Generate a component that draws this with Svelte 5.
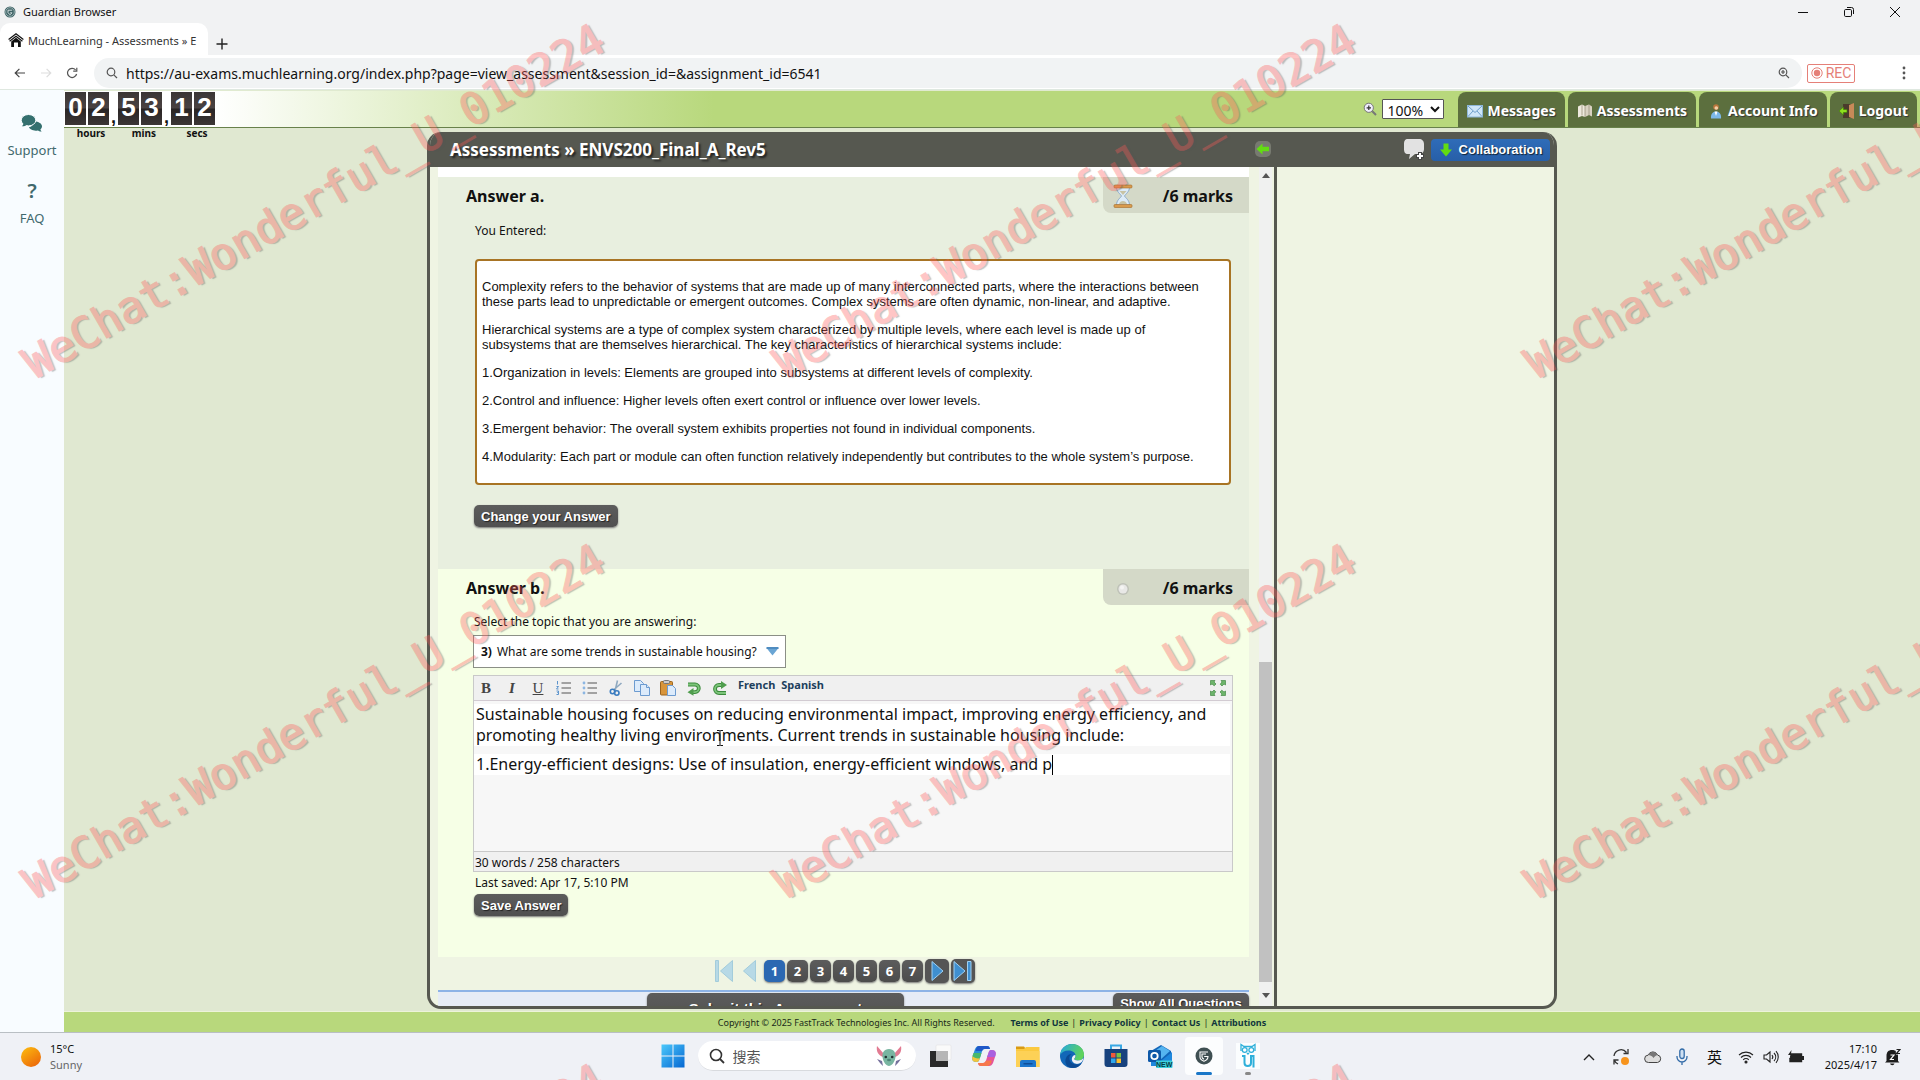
<script>
  const answers = [
    'Complexity refers to the behavior of systems that are made up of many interconnected parts, where the interactions between these parts lead to unpredictable or emergent outcomes. Complex systems are often dynamic, non-linear, and adaptive.',
    'Hierarchical systems are a type of complex system characterized by multiple levels, where each level is made up of subsystems that are themselves hierarchical. The key characteristics of hierarchical systems include:',
    '1.Organization in levels: Elements are grouped into subsystems at different levels of complexity.',
    '2.Control and influence: Higher levels often exert control or influence over lower levels.',
    '3.Emergent behavior: The overall system exhibits properties not found in individual components.',
    '4.Modularity: Each part or module can often function relatively independently but contributes to the whole system’s purpose.'
  ];
  const clock = [
    { digits: ['0', '2'], label: 'hours' },
    { digits: ['5', '3'], label: 'mins' },
    { digits: ['1', '2'], label: 'secs' }
  ];
  const nav = ['Messages', 'Assessments', 'Account Info', 'Logout'];
  const pages = [1, 2, 3, 4, 5, 6, 7];
  const links = ['Terms of Use', 'Privacy Policy', 'Contact Us', 'Attributions'];
  const marks = [0, 1, 2].flatMap((row) => [0, 1, 2].map((col) => ({ x: 38 + col * 751, y: 386 + row * 520 })));
  let current = $state(1);
</script>

<div class="desktop">
  <header class="titlebar">
    <svg class="shield" viewBox="0 0 12 12" width="12" height="12"><circle cx="6" cy="6" r="5.5" fill="#3f6467" /><circle cx="6" cy="6" r="4.3" fill="none" stroke="#b9cccc" stroke-width=".7" /><path d="M8.2 4.2H4v2.4L6 8.8l2-2H6.2" fill="none" stroke="#dfe9e9" stroke-width=".9" /></svg>
    <span>Guardian Browser</span>
    <div class="wincontrols">
      <button aria-label="Minimize"><svg viewBox="0 0 12 12" width="12" height="12"><path d="M1 6.5h10" /></svg></button>
      <button aria-label="Restore"><svg viewBox="0 0 12 12" width="12" height="12"><rect x="1.5" y="3.5" width="7" height="7" rx="1.2" /><path d="M4 1.5h4.5a2 2 0 0 1 2 2V8" /></svg></button>
      <button aria-label="Close"><svg viewBox="0 0 12 12" width="12" height="12"><path d="M1 1l10 10M11 1L1 11" /></svg></button>
    </div>
  </header>

  <div class="tabs">
    <div class="tab">
      <svg viewBox="0 0 16 14" width="16" height="14"><path d="M.6 6.4L8 .8l7.400 5.600" fill="none" stroke="#111" stroke-width="1.200" /><path d="M1.600 8.200L8 3.200l6.400 5" fill="none" stroke="#111" stroke-width="1.200" /><path d="M3.200 8.600L8 4.800l4.800 3.800V14H10V9.500H6V14H3.200z" fill="#111" /></svg>
      <span>MuchLearning - Assessments » E</span>
    </div>
    <button class="plus" aria-label="New tab"><svg viewBox="0 0 12 12" width="12" height="12"><path d="M6 .5v11M.5 6h11" stroke="#222" stroke-width="1.4" /></svg></button>
  </div>

  <div class="toolbar">
    <button aria-label="Back"><svg viewBox="0 0 12 12" width="12" height="12"><path d="M11 6H1.2M5.4 1.8L1.2 6l4.2 4.2" fill="none" stroke="#444" stroke-width="1.2" /></svg></button>
    <button aria-label="Forward"><svg viewBox="0 0 12 12" width="12" height="12"><path d="M1 6h9.8M6.6 1.8L10.8 6l-4.2 4.2" fill="none" stroke="#ddd" stroke-width="1.2" /></svg></button>
    <button aria-label="Reload"><svg viewBox="0 0 12 12" width="12" height="12"><path d="M9.6 2.9A4.6 4.6 0 1 0 10.6 7M10.8.8v3.4H7.2" fill="none" stroke="#555" stroke-width="1.2" /></svg></button>
    <label class="url">
      <svg viewBox="0 0 12 12" width="12" height="12"><circle cx="5" cy="5" r="3.8" /><path d="M7.8 7.8L11 11" /></svg>
      <input aria-label="Address" value="https://au-exams.muchlearning.org/index.php?page=view_assessment&session_id=&assignment_id=6541" />
      <svg viewBox="0 0 12 12" width="12" height="12"><circle cx="5" cy="5" r="3.8" /><path d="M7.8 7.8L11 11M3 5h4M5 3v4" /></svg>
    </label>
    <span class="rec"><svg viewBox="0 0 12 12" width="12" height="12"><circle cx="6" cy="6" r="5.2" fill="none" stroke="#e58078" /><circle cx="6" cy="6" r="3.2" fill="#e58078" /></svg>REC</span>
    <button class="more" aria-label="More"><svg viewBox="0 0 4 14" width="4" height="14" fill="#555"><circle cx="2" cy="2" r="1.4" /><circle cx="2" cy="7" r="1.4" /><circle cx="2" cy="12" r="1.4" /></svg></button>
  </div>

  <div class="body">
    <aside class="side">
      <a href="#support">
        <svg viewBox="0 0 22 18" width="22" height="18"><path d="M12 7.5c4.800-.5 9 1.700 9 4.800 0 1.300-.6 2.300-1.600 3.100.2.900.8 1.600 1.300 2.100-1.700.1-3.100-.5-3.900-1-4 .8-8.200-.8-8.800-3.400 3.300-.3 4.400-2.600 4-5.600z" fill="#35706f" /><ellipse cx="7.500" cy="6.200" rx="7.300" ry="5.700" fill="#35706f" stroke="#f9fdff" /><path d="M2.500 9c0 1.500-.9 2.600-1.700 3.300 2 .2 3.700-.5 4.700-1.300z" fill="#35706f" /></svg>
        <span>Support</span>
      </a>
      <a href="#faq"><b>?</b><span>FAQ</span></a>
    </aside>

    <div class="site">
      <div class="banner">
        <div class="clock">
          {#each clock as unit, i}
            {#if i}<span class="comma">,</span>{/if}
            <div class="unit">
              <div class="digits">{#each unit.digits as digit}<span>{digit}</span>{/each}</div>
              <b>{unit.label}</b>
            </div>
          {/each}
        </div>
        <label class="zoom">
          <svg viewBox="0 0 14 14" width="14" height="14"><circle cx="5.800" cy="5.800" r="4.600" fill="#f0eefc" stroke="#777" /><path d="M3.600 5.800H8M5.800 3.600V8" stroke="#333" stroke-width="1.200" /><path d="M9.300 9.300L13 13" stroke="#777" stroke-width="2" /></svg>
          <select aria-label="Zoom"><option>100%</option></select>
        </label>
        <nav>
          {#each nav as item, i}
            <a href="#{i}">
              <svg viewBox="0 0 16 16" width="16" height="16">
                {#if i === 0}
                  <rect x=".5" y="2.500" width="15" height="11.500" fill="#cfe6f8" stroke="#8fb8da" /><path d="M1 3l7 6.500L15 3M1 13.500l5-5.500M15 13.500L10 8" fill="none" stroke="#6f9fca" />
                {:else if i === 1}
                  <path d="M1 3.500l4-2 3 1.500v11l-3-1-4 1.500z" fill="#eee9dd" /><path d="M8 3l4-1.500 3 2v10l-3-1.500-4 2z" fill="#d9d2c2" /><path d="M5 2v10.500M8 3v11M12 2v10" stroke="#9a927f" stroke-width=".8" />
                {:else if i === 2}
                  <circle cx="8" cy="4" r="2.800" fill="#b9763c" /><circle cx="8.300" cy="5" r="1.800" fill="#f5cfa5" /><path d="M3 15.500c-.5-4 1.500-7 5-7s5.500 3 5 7z" fill="#7db9ea" /><path d="M6.500 8.500L8 13l1.500-4.500z" fill="#fff" />
                {:else}
                  <path d="M4 1h8v14H4z" fill="#4b3a2c" /><path d="M10 2l5-2v16l-5-2z" fill="#c88a58" /><path d="M0 8l4.500-4v2.500H8v3H4.500V12z" fill="#8fe01e" stroke="#3b7a05" stroke-width=".6" />
                {/if}
              </svg>
              {item}
            </a>
          {/each}
        </nav>
      </div>

      <main class="stage">
        <div class="panel">
          <div class="head">
            <h1>Assessments » ENVS200_Final_A_Rev5</h1>
            <button class="collapse" aria-label="Collapse panel"><svg viewBox="0 0 16 16" width="16" height="16"><rect width="16" height="16" rx="5" fill="#777a70" /><path d="M1.500 8l6-5.500v3.200H14v4.600H7.500v3.200z" fill="#62dc12" /></svg></button>
            <div class="tools">
              <button class="chat" aria-label="Add comment"><svg viewBox="0 0 22 24" width="22" height="24"><path d="M5 1h11c3 0 5 2 5 5v5c0 3-2 5-5 5h-4l-6 5 1-5H5c-3 0-4-2-4-5V6c0-3 1-5 4-5z" fill="#e2e2e2" /><path d="M17 14v8M13 18h8" stroke="#444" stroke-width="4" /><path d="M17 15v6M14 18h6" stroke="#fff" stroke-width="2" /></svg></button>
              <button class="collab"><svg viewBox="0 0 14 14" width="14" height="14"><path d="M4.500.5h5v6H13L7 13.500 1 6.500h3.500z" fill="#62dc12" /></svg>Collaboration</button>
            </div>
          </div>

          <div class="columns">
            <div class="scroller">
              <div class="content">
                <section class="answer a">
                  <div class="top">
                    <h2>Answer a.</h2>
                    <div class="marks">
                      <svg viewBox="0 0 20 24" width="20" height="24"><path d="M3.500 3h13c0 5-4 7-5 9 1 2 5 4 5 9h-13c0-5 4-7 5-9-1-2-5-4-5-9z" fill="#dcebf8" stroke="#8ba9c8" /><path d="M6 20c1-4 7-4 8 0zM6.500 7h7L10 11z" fill="#c8c3a4" /><rect x="1" y="1" width="18" height="3" rx="1" fill="#d99b4e" stroke="#a56c2a" stroke-width=".6" /><rect x="1" y="20.500" width="18" height="3" rx="1" fill="#d99b4e" stroke="#a56c2a" stroke-width=".6" /></svg>
                      <b>/6 marks</b>
                    </div>
                  </div>
                  <p class="hint">You Entered:</p>
                  <div class="entered">{#each answers as text}<p>{text}</p>{/each}</div>
                  <button class="dark">Change your Answer</button>
                </section>

                <section class="answer b">
                  <div class="top">
                    <h2>Answer b.</h2>
                    <div class="marks">
                      <svg viewBox="0 0 20 24" width="20" height="24"><circle cx="10" cy="13" r="6" fill="#bfc2b8" /><circle cx="10" cy="13" r="4.500" fill="#e8e8e6" /><circle cx="9" cy="11.500" r="2" fill="#f4f4f2" /></svg>
                      <b>/6 marks</b>
                    </div>
                  </div>
                  <p class="hint near">Select the topic that you are answering:</p>
                  <label class="topic">
                    <span><b>3)</b>What are some trends in sustainable housing?</span>
                    <svg viewBox="0 0 13 9" width="13" height="9"><path d="M.5 1h12L6.500 8.500z" fill="#6aa5d4" /><path d="M.5 1h12" stroke="#4f8cc0" stroke-width="2" /></svg>
                    <select aria-label="Topic"><option>3) What are some trends in sustainable housing?</option></select>
                  </label>

                  <div class="editor">
                    <div class="edbar">
                      <button class="fmt bold">B</button>
                      <button class="fmt italic">I</button>
                      <button class="fmt under">U</button>
                      <button aria-label="Numbered list"><svg viewBox="0 0 16 16" width="16" height="16"><path d="M5.500 3H15M5.500 8H15M5.500 13H15" stroke="#555" stroke-width="1.200" /><path d="M1.500 1v3.500M.5 6.500h2l-2 2.500h2M.5 11h2v1.500h-1H2.500V14.500h-2" stroke="#5b93cc" fill="none" /></svg></button>
                      <button aria-label="Bulleted list"><svg viewBox="0 0 16 16" width="16" height="16"><path d="M5.500 3H15M5.500 8H15M5.500 13H15" stroke="#555" stroke-width="1.200" /><g fill="#8cb6e2"><circle cx="2" cy="3" r="1.400" /><circle cx="2" cy="8" r="1.400" /><circle cx="2" cy="13" r="1.400" /></g></svg></button>
                      <button aria-label="Cut"><svg viewBox="0 0 16 16" width="16" height="16" fill="none"><path d="M9.500.5L7 11M13.500 3L5.500 10" stroke="#8fa9c0" stroke-width="1.600" /><circle cx="4.500" cy="11.500" r="2.200" stroke="#3a7cc0" stroke-width="1.600" /><circle cx="8.800" cy="13" r="2.200" stroke="#3a7cc0" stroke-width="1.600" /></svg></button>
                      <button aria-label="Copy"><svg viewBox="0 0 16 16" width="16" height="16" fill="#dcebfb" stroke="#6c9bd0"><path d="M.5 .500h6l3 3v8h-9z" /><path d="M6.500 4.500h6l3 3v8h-9z" /><path d="M12.500 4.500v3h3" /></svg></button>
                      <button aria-label="Paste"><svg viewBox="0 0 16 16" width="16" height="16"><rect x=".5" y="1.500" width="12" height="13.500" rx="1" fill="#d8953a" stroke="#9a6420" /><rect x="3.500" y=".5" width="6" height="3" rx="1" fill="#ccc" stroke="#777" /><path d="M7.500 5.500h5l3 3v7h-8z" fill="#dcebfb" stroke="#6c9bd0" /></svg></button>
                      <button aria-label="Undo"><svg viewBox="0 0 16 16" width="16" height="16" fill="none"><path d="M2 4.500h7a3.800 3.800 0 0 1 0 7.600H6" stroke="#3c8a3c" stroke-width="3.800" /><path d="M2 4.500h7a3.800 3.800 0 0 1 0 7.600H6" stroke="#7cc47a" stroke-width="1.800" /><path d="M7.500 8L1.500 12.200l6 3.500z" fill="#4f9d4d" /></svg></button>
                      <button aria-label="Redo"><svg viewBox="0 0 16 16" width="16" height="16" fill="none"><path d="M14 13H7a4 4 0 0 1 0-8h3" stroke="#3c8a3c" stroke-width="3.800" /><path d="M14 13H7a4 4 0 0 1 0-8h3" stroke="#7cc47a" stroke-width="1.800" /><path d="M9 1l6 4-6 4z" fill="#4f9d4d" /></svg></button>
                      <div class="langs"><button>French</button><button>Spanish</button></div>
                      <button class="full" aria-label="Full screen"><svg viewBox="0 0 18 18" width="18" height="18" fill="#6db56b" stroke="#357d35" stroke-width=".6"><path d="M1.500 1.500h4.500L5 3l2 2-1.800 1.800L3 5 1.500 6z" /><path d="M16.500 1.500V6L15 5l-2 2-1.800-1.800L13 3l-1-1.500z" /><path d="M1.500 16.500V12L3 13l2-2 1.800 1.800L5 15l1 1.500z" /><path d="M16.500 16.500H12l1-1.500-2-2 1.800-1.800L15 13l1.500-1z" /></svg></button>
                    </div>
                    <div class="text" contenteditable="true" role="textbox" aria-label="Answer" tabindex="0">
                      <p>Sustainable housing focuses on reducing environmental impact, improving energy efficiency, and promoting healthy living environments. Current trends in sustainable housing include:</p>
                      <p>1.Energy-efficient designs: Use of insulation, energy-efficient windows, and p<i class="caret"></i></p>
                    </div>
                    <div class="status">30 words / 258 characters</div>
                    <svg class="ibeam" viewBox="0 0 8 16" width="8" height="16"><path d="M1 .5h2.500l.5.5.5-.5H7M4 1v14M1 15.500h2.500L4 15l.5.500H7" fill="none" stroke="#111" /></svg>
                  </div>
                  <p class="saved">Last saved: Apr 17, 5:10 PM</p>
                  <button class="dark">Save Answer</button>
                </section>

                <div class="pager">
                  <button class="ghost" aria-label="First page" disabled><svg viewBox="0 0 22 24" width="22" height="24"><path d="M2.500 1.500h3v21h-3zM19.500 1.500v21l-12-10.500z" fill="#b7d9e6" stroke="#a3ccdb" /></svg></button>
                  <button class="ghost" aria-label="Previous page" disabled><svg viewBox="0 0 22 24" width="22" height="24"><path d="M16.500 1.500v21L4.500 12z" fill="#b7d9e6" stroke="#a3ccdb" /></svg></button>
                  {#each pages as page}
                    <button class="page" class:on={page === current} onclick={() => (current = page)}>{page}</button>
                  {/each}
                  <button class="arrow" aria-label="Next page"><svg viewBox="0 0 24 24" width="24" height="24"><path d="M7 2.500v19L18 12z" fill="#3f8fd0" stroke="#9fd0f2" /></svg></button>
                  <button class="arrow" aria-label="Last page"><svg viewBox="0 0 24 24" width="24" height="24"><path d="M3 2.500v19L14 12zM16.500 2.500h3.500v19h-3.500z" fill="#3f8fd0" stroke="#9fd0f2" /></svg></button>
                </div>

                <div class="submitbar">
                  <button class="dark submit">Submit this Assessment</button>
                  <button class="dark all">Show All Questions</button>
                </div>
              </div>
              <div class="scrollbar">
                <svg viewBox="0 0 8 5" width="8" height="5"><path d="M0 5l4-5 4 5z" fill="#555" /></svg>
                <i></i>
                <svg viewBox="0 0 8 5" width="8" height="5"><path d="M0 0l4 5 4-5z" fill="#555" /></svg>
              </div>
            </div>
            <div class="blank"></div>
          </div>
        </div>
      </main>

      <footer>
        <span>Copyright © 2025 FastTrack Technologies Inc. All Rights Reserved.</span>
        <div>{#each links as link, i}{#if i}<span class="bar">|</span>{/if}<a href="#{link}">{link}</a>{/each}</div>
      </footer>
    </div>
  </div>

  <div class="taskbar">
    <div class="weather">
      <svg viewBox="0 0 22 22" width="22" height="22"><defs><linearGradient id="sun" x1="0" y1="0" x2=".7" y2="1"><stop offset="0" stop-color="#fdbf10" /><stop offset="1" stop-color="#ec6a0a" /></linearGradient></defs><circle cx="11" cy="11" r="10" fill="url(#sun)" /></svg>
      <div><span>15°C</span><span class="dim">Sunny</span></div>
    </div>
    <div class="apps">
      <button class="app" aria-label="Start"><svg viewBox="0 0 24 24" width="24" height="24"><defs><linearGradient id="win" x1="0" y1="0" x2="1" y2="1"><stop offset="0" stop-color="#4cc8fb" /><stop offset="1" stop-color="#0567d2" /></linearGradient></defs><path d="M.5.5h11v11H.5zM12.500.5h11v11h-11zM.5 12.500h11v11H.5zM12.500 12.500h11v11h-11z" fill="url(#win)" /></svg></button>
      <label class="search">
        <svg viewBox="0 0 16 16" width="16" height="16"><circle cx="7" cy="7" r="5.500" fill="none" stroke="#333" stroke-width="1.600" /><path d="M11 11l4 4" stroke="#333" stroke-width="1.800" /></svg>
        <input aria-label="搜索" placeholder="搜索" />
        <svg viewBox="0 0 26 22" width="26" height="22"><path d="M8 9L1 1c-1 5 1 9 6 11zM18 9l7-8c1 5-1 9-6 11z" fill="#e27b92" /><path d="M6 16l-5-2 3 4 3 3zM20 16l5-2-3 4-3 3z" fill="#75709c" /><path d="M13 4c5 0 7 4 6.500 8-.5 5-4 9-6.500 9s-6-4-6.500-9C6 8 8 4 13 4z" fill="#79b5a1" /><circle cx="9.800" cy="12" r="1.300" fill="#233" /><circle cx="16.200" cy="12" r="1.300" fill="#233" /><ellipse cx="13" cy="15" rx="2" ry="1.200" fill="#4d8577" /></svg>
      </label>
      <button class="app" aria-label="Task view"><svg viewBox="0 0 24 24" width="24" height="24"><rect x="8" y="1" width="15" height="15" rx="1" fill="#fafafa" stroke="#ddd" stroke-width=".5" /><path d="M2 7h18v16H2z" fill="#2a2a2a" /><path d="M8 7h12v10H8z" fill="#b6b6b6" /></svg></button>
      <button class="app" aria-label="Copilot"><svg viewBox="0 0 26 24" width="26" height="24"><path d="M8 2h8c2 0 2.500 1 3 3l-5 0c-2 0-3 2-3.500 4L8.500 15c-.5 2-1 3-3 3C1 18 .5 15 2 11l2-6C5 3 6 2 8 2z" fill="#2a90d8" /><path d="M1.500 12c1 1 6 1 7.500 1l-.5 2c-.5 2-1 3-3 3C1 18 .7 15 1.500 12z" fill="#f1c63c" /><path d="M2.500 9h8l-1.500 5c-2 1-6 0-7.500-2z" fill="#48b86c" /><path d="M18 22h-8c-2 0-2.500-1-3-3h5c2 0 3-2 3.500-4l2-6c.5-2 1-3 3-3 4.500 0 5 3 3.500 7l-2 6c-1 2-2 3-4 3z" fill="#e5549c" /><path d="M16 13l1.500-4c.5-2 1-3 3-3 4.500 0 5 3 3.500 7z" fill="#a860e0" /><path d="M7 19h5c1.500 0 2.500-1 3-2.500h6c-1 3-2 5.500-5 5.500h-6c-2 0-2.500-1-3-3z" fill="#f6784c" /><path d="M8 2h8c2 0 2.500 1 3 3h-5c-2 0-2.500.5-3 2H4.500C5.300 3.500 6 2 8 2z" fill="#1f58c8" /></svg></button>
      <button class="app" aria-label="File Explorer"><svg viewBox="0 0 26 24" width="26" height="24"><path d="M1 2.500h8l2 2.500H1z" fill="#d99a12" /><path d="M1 5h8l2-2h13.500v20H1z" fill="#fbc93f" /><path d="M1 7h23.500v16H1z" fill="#fdd156" /><path d="M5 23v-5a2 2 0 0 1 2-2h12a2 2 0 0 1 2 2v5z" fill="#1b75cc" /><path d="M8.500 19h9v1.500h-9z" fill="#0d4d98" /></svg></button>
      <button class="app" aria-label="Edge"><svg viewBox="0 0 26 26" width="26" height="26"><defs><linearGradient id="edge" x1="0" y1="0" x2="1" y2=".3"><stop offset="0" stop-color="#24a8e0" /><stop offset="1" stop-color="#5fd35c" /></linearGradient></defs><circle cx="13" cy="13" r="12" fill="#1267b8" /><path d="M1.200 12C2 5 7 1 13 1c7 0 12 5 12 10.500 0 4-3 6-6 6-2.500 0-4-1-3.500-2 1-1 1.300-2 1-3.500C16 9 13 7.500 9.500 7.500c-4 0-7 2-8.300 4.500z" fill="url(#edge)" /><path d="M12.500 11c-3 2-3 7 1 9.500 3 1.800 7 1.200 9.500-.5-2 3-5 5-9 5-6 0-9-5-7-10 1-2.500 3-4 5.500-4z" fill="#0b4a94" /><path d="M16.300 12c.3 1.500 0 2.500-1 3.500-.5 1 1 2 3.500 2 3 0 4.500-1 5.500-2.500 0 3-2 5-5 5.800-3 .7-6.500-1.300-6.500-4.800 0-2 1.500-4 3.500-4z" fill="#eff1f6" /></svg></button>
      <button class="app" aria-label="Store"><svg viewBox="0 0 24 24" width="24" height="24"><path d="M7 6V1.500h10V6" fill="none" stroke="#38a7e4" stroke-width="2" /><path d="M.5 5h23v15a3 3 0 0 1-3 3h-17a3 3 0 0 1-3-3z" fill="#17427e" /><path d="M7 9h4.500v4.500H7z" fill="#f05a3c" /><path d="M12.500 9H17v4.500h-4.500z" fill="#7cc142" /><path d="M7 14.500h4.500V19H7z" fill="#2ea7ec" /><path d="M12.500 14.500H17V19h-4.500z" fill="#fcbf2b" /></svg></button>
      <button class="app" aria-label="Outlook"><svg viewBox="0 0 26 24" width="26" height="24"><path d="M4 7l10-6 10 6v15H4z" fill="#1265b8" /><path d="M5 9l10-7 8 5-10 9z" fill="#55b4f0" /><path d="M4 12l10 5 11-9v14H4z" fill="#1d87dd" /><rect x="1" y="6" width="13" height="12" rx="1.500" fill="#0d58a8" /><circle cx="7.500" cy="12" r="3.200" fill="none" stroke="#fff" stroke-width="1.800" /><rect x="9" y="16.500" width="16.500" height="7.500" rx="1" fill="#3ed0dc" /><text x="17.200" y="23" text-anchor="middle" class="new">NEW</text></svg></button>
      <button class="app live" aria-label="Guardian Browser"><svg viewBox="0 0 18 18" width="18" height="18"><circle cx="9" cy="9" r="8.500" fill="#3f4f52" /><path d="M13 5H5v5c0 2 2 3.500 4 4.200 2-.7 4-2.200 4-4.700H9.200M11 7H7v3c0 1 1 1.700 2 2.200" fill="none" stroke="#fff" stroke-width="1.100" /></svg></button>
      <button class="app dot" aria-label="ProctorU"><svg viewBox="0 0 24 26" width="24" height="26"><rect width="24" height="26" fill="#fbfdfe" /><g fill="none" stroke="#2fb0da" stroke-width="1.300"><path d="M5 8V1.500L8 3.500h8l3-2V8" /><circle cx="8.700" cy="7" r="2.400" /><circle cx="15.300" cy="7" r="2.400" /><path d="M11 10l1 1 1-1" /><path d="M6 13h2.500v7c0 4 6.500 4 6.500 0v-7h2.500v11.500" stroke-width="2" /></g></svg></button>
    </div>
    <div class="tray">
      <button class="chevron" aria-label="Hidden icons"><svg viewBox="0 0 12 12" width="12" height="12"><path d="M1 9l5-5 5 5" fill="none" stroke="#222" stroke-width="1.400" /></svg></button>
      <svg viewBox="0 0 18 18" width="18" height="18"><path d="M2 8a7 7 0 0 1 12.500-3.500M16 1v4.500h-4.500M16 8M6 16a7 7 0 0 1-3.800-4M2 16.500V12h4.500" fill="none" stroke="#333" stroke-width="1.300" /><circle cx="13" cy="13" r="4" fill="#f7941d" /></svg>
      <svg viewBox="0 0 18 14" width="18" height="14"><path d="M4.500 12.500a3.700 3.700 0 0 1-.3-7.400A5 5 0 0 1 13.500 5a3.800 3.800 0 0 1 0 7.500z" fill="#ddd" stroke="#444" /><path d="M4.200 5.100A5 5 0 0 1 13.500 5c-2 .5-3 1.500-4 3-1.500-2-3.500-2.900-5.300-2.900z" fill="#777" /></svg>
      <svg viewBox="0 0 12 18" width="12" height="18" fill="none" stroke="#336ca8" stroke-width="1.300"><rect x="3.800" y="1" width="4.400" height="9.500" rx="2.200" fill="#cfe0f2" /><path d="M1 8v1a5 5 0 0 0 10 0V8M6 14v3" /></svg>
      <span class="ime">英</span>
      <div class="status-icons">
        <svg viewBox="0 0 16 14" width="16" height="14" fill="none" stroke="#222" stroke-width="1.100"><path d="M1 5a10 10 0 0 1 14 0M3 7.500a7 7 0 0 1 10 0M5.200 9.800a4 4 0 0 1 5.600 0" /><circle cx="8" cy="12" r="1" fill="#222" /></svg>
        <svg viewBox="0 0 16 14" width="16" height="14" fill="none" stroke="#222" stroke-width="1.100"><path d="M1 5h2.500L7 2v10L3.500 9H1zM9 5c1 1.200 1 2.800 0 4M11 3c2.200 2.300 2.200 5.700 0 8M13 1.200c3 3.300 3 8.300 0 11.600" /></svg>
        <svg viewBox="0 0 17 14" width="17" height="14"><path d="M3 4h10.500v7.500H2V8" fill="#222" stroke="#222" stroke-width="1.400" /><path d="M15 6v4" stroke="#222" stroke-width="2" /><path d="M3.500 0L0 5h2.500L1.500 9 5.500 4H3z" fill="#222" /></svg>
      </div>
      <div class="time"><span>17:10</span><span>2025/4/17</span></div>
      <svg viewBox="0 0 16 18" width="16" height="18"><path d="M1.500 13V8c0-4 2-6 5.500-6 4 0 6 2 6 6v5l1.500 1.500H0z" fill="#1d1d1d" /><path d="M5 15.500h4.500a2.300 2.300 0 0 1-4.500 0z" fill="#1d1d1d" /><path d="M5.500 7h3.500l-3.500 4.500h3.500" fill="none" stroke="#fff" stroke-width="1.200" /><path d="M10.500 0H16v6.500h-5z" fill="#eff1f6" /><path d="M11.500 1.500h3.500l-3.500 4h3.500" fill="none" stroke="#1d1d1d" stroke-width="1.200" /></svg>
    </div>
  </div>

  <div class="watermarks" aria-hidden="true">
    {#each marks as mark}<span style="left:{mark.x}px;top:{mark.y}px">WeChat:Wonderful_U_010224</span>{/each}
  </div>
</div>

<style>
  :global(body) { margin: 0; }
  .desktop { position: relative; height: 100vh; display: flex; flex-direction: column; overflow: hidden; font-family: 'Noto Sans', 'Noto Sans CJK SC', sans-serif; font-size: 12px; color: #111; background: #eff1f6; }
  * { box-sizing: border-box; }
  button, input, select { font: inherit; color: inherit; }
  button { border: 0; background: none; padding: 0; display: inline-flex; align-items: center; justify-content: center; white-space: nowrap; }
  a { color: inherit; text-decoration: none; }
  h1, h2, p { margin: 0; }
  svg { display: block; flex: none; }

  .titlebar { height: 23px; flex: none; background: #f1f2f3; display: flex; align-items: center; gap: 7px; padding-left: 4px; font-size: 11px; }
  .wincontrols { margin-left: auto; display: flex; gap: 2px; padding-right: 3px; }
  .wincontrols button { width: 44px; height: 20px; }
  .wincontrols svg { fill: none; stroke: #111; }
  .tabs { height: 32px; flex: none; background: #f1f2f3; display: flex; align-items: center; }
  .tab { width: 208px; height: 32px; background: #fff; border-radius: 10px 10px 0 0; display: flex; align-items: center; gap: 4px; padding: 2px 8px 0; color: #333; font-size: 11px; white-space: nowrap; }
  .plus { margin: 10px 0 0 8px; }
  .toolbar { height: 35px; flex: none; background: #fff; display: flex; align-items: center; padding: 2px 14px 0; gap: 14px; border-bottom: 1px solid #dfe8e0; }
  .url { flex: 1; margin-left: 2px; height: 30px; border-radius: 15px; background: #f1f3f4; display: flex; align-items: center; gap: 8px; padding: 0 12px; }
  .url svg { fill: none; stroke: #555; stroke-width: 1.2; }
  .url input { flex: 1; min-width: 0; border: 0; background: none; padding: 0; font-size: 14px; outline: 0; }
  .rec { margin-left: -9px; height: 19px; width: 48px; border: 1px solid #e58078; border-radius: 2px; color: #e58078; font-family: Roboto, sans-serif; font-size: 14px; display: flex; align-items: center; justify-content: center; gap: 3px; }
  .more { margin-left: 33px; }

  .body { flex: 1; min-height: 0; display: flex; }
  .side { width: 64px; flex: none; background: #f8fcff; padding-top: 24px; display: flex; flex-direction: column; gap: 23px; color: #41696d; font-size: 13px; }
  .side a { display: flex; flex-direction: column; align-items: center; gap: 9px; line-height: 18px; }
  .side b { font-size: 20px; font-weight: 600; }
  .site { flex: 1; min-width: 0; display: flex; flex-direction: column; background: #e0e8d1; }

  .banner { height: 38px; flex: none; background: linear-gradient(90deg, #fff 150px, #b8d87c 650px); border-top: 1px solid #e0ead0; border-bottom: 1px solid #68814a; display: flex; align-items: flex-end; }
  .clock { display: flex; align-items: flex-start; height: 36px; padding: 1px 0 0 1px; }
  .unit { display: flex; flex-direction: column; align-items: center; font-size: 10px; line-height: 16px; }
  .unit b { padding-left: 8px; }
  .digits { display: flex; gap: 2px; }
  .digits span { width: 21px; height: 33px; background: linear-gradient(#3a3535, #4a4242 48%, #2a2525 52%, #3c3636); color: #fff; font: bold 26px/30px 'Liberation Sans', sans-serif; text-align: center; }
  .comma { width: 9px; font: bold 18px/50px 'Liberation Sans', sans-serif; height: 36px; text-align: center; }
  .zoom { margin-left: auto; align-self: center; display: flex; align-items: center; gap: 5px; margin-right: 14px; }
  .zoom select { width: 62px; height: 20px; border: 1px solid #555; border-radius: 1px; background: #fff; font-size: 14px; line-height: 16px; padding: 0; }
  nav { display: flex; gap: 3px; padding-right: 3px; }
  nav a { height: 35px; padding: 2px 9px 0; background: #5c6f3e; border-radius: 8px 8px 0 0; color: #fff; font-size: 14px; font-weight: 700; display: flex; align-items: center; gap: 4px; white-space: nowrap; text-shadow: 1px 1px 1px #333; }

  .stage { flex: 1; min-height: 0; display: flex; justify-content: center; padding: 4px 0 2px; border-bottom: 1px solid #edf3da; }
  .panel { width: 1130px; max-width: 100%; background: #eff4e3; border: 3px solid #565850; border-top: 0; border-radius: 14px; overflow: hidden; display: flex; flex-direction: column; }
  .head { height: 35px; flex: none; background: #565850; display: flex; align-items: center; padding: 0 4px 0 20px; }
  h1 { font-size: 17px; color: #fff; text-shadow: 2px 2px 2px #222; }
  .collapse { margin: 0 0 2px auto; }
  .tools { width: 279px; display: flex; justify-content: flex-end; align-items: center; gap: 6px; }
  .collab { height: 22px; width: 119px; border-radius: 4px; background: linear-gradient(#2f6cb8, #275fa8); color: #fff; font: bold 13px 'Liberation Sans', sans-serif; gap: 6px; text-shadow: 1px 1px 1px #123; }
  .columns { flex: 1; min-height: 0; display: flex; }
  .scroller { flex: 1; min-width: 0; display: flex; padding-left: 8px; overflow: hidden; }
  .content { flex: 1; min-width: 0; border-top: 10px solid #fff; }
  .blank { width: 280px; flex: none; border-left: 3px solid #565850; }
  .scrollbar { width: 13px; margin: 0 2px 0 10px; background: #f0f1f0; display: flex; flex-direction: column; align-items: center; padding: 6px 0 8px; }
  .scrollbar i { width: 100%; flex: 0 0 320px; margin: auto 0 11px; background: #c1c1c1; }

  .answer { padding-left: 36px; }
  .a { background: #e8efdf; height: 392px; }
  .b { background: #f6ffe6; height: 388px; }
  .top { display: flex; justify-content: space-between; height: 36px; margin-left: -8px; }
  h2 { font-size: 16px; line-height: 38px; }
  .marks { width: 146px; background: #d4d9c8; border-radius: 0 0 0 8px; display: flex; align-items: center; justify-content: space-between; padding: 2px 16px 0 10px; font-size: 16px; }
  .hint { font-size: 12px; line-height: 18px; padding: 9px 0 0 1px; }
  .near { padding: 8px 0 0; }
  .entered { margin: 19px 18px 20px 1px; height: 226px; border: 2px solid #a87424; border-radius: 4px; background: #fff; padding: 18px 20px 0 5px; font: 13px/15px 'Liberation Sans', Arial, sans-serif; display: flex; flex-direction: column; gap: 13px; }
  .dark { height: 22px; padding: 0 7px; border-radius: 5px; background: linear-gradient(#5c5c5c, #505050); color: #fff; font: bold 13px 'Liberation Sans', Arial, sans-serif; box-shadow: 0 1px 2px #777; text-shadow: 1px 1px 1px #222; }
  .topic { position: relative; width: 313px; height: 33px; margin: 4px 0 7px -1px; border: 1px solid #8b8f86; background: #fff; display: flex; align-items: center; justify-content: space-between; padding: 0 6px 0 7px; white-space: nowrap; }
  .topic b { margin-right: 5px; }
  .topic select { position: absolute; inset: 0; width: 100%; opacity: 0; }
  .editor { position: relative; margin: 0 16px 0 -1px; border: 1px solid #c9c9c9; background: #f7f7f7; }
  .edbar { height: 25px; background: #f0f0f0; border-bottom: 1px solid #d2cbd2; display: flex; align-items: center; gap: 10px; padding: 0 4px; }
  .edbar > button { width: 16px; height: 16px; }
  .fmt { font: 15px 'Liberation Serif', serif; color: #444; }
  .bold { font-weight: 700; }
  .italic { font-style: italic; font-weight: 700; }
  .under { text-decoration: underline; }
  .langs { display: flex; gap: 6px; font-size: 11px; font-weight: 700; color: #1d3f5c; padding-bottom: 8px; }
  .edbar > .full { width: 18px; margin-left: auto; margin-right: 1px; }
  .text { height: 150px; padding: 3px 2px 0 0; font-size: 16px; line-height: 21px; outline: 0; }
  .text p { background: #fff; padding-left: 2px; margin-bottom: 8px; }
  .caret { display: inline-block; width: 1px; height: 20px; background: #000; vertical-align: -5px; }
  .status { height: 20px; border-top: 1px solid #c9c9c9; background: #f0f0f0; line-height: 22px; padding-left: 1px; }
  .ibeam { position: absolute; left: 242px; top: 54px; }
  .saved { line-height: 22px; padding-left: 1px; }

  .pager { height: 33px; display: flex; justify-content: center; align-items: center; gap: 2px; padding-bottom: 6px; }
  .page { width: 21px; height: 22px; border-radius: 5px; background: linear-gradient(#5c5c5c, #4c4c4c); color: #fff; font-size: 13px; font-weight: 700; box-shadow: 0 1px 2px #777; }
  .on { background: #2b68b2; }
  .ghost { width: 24px; height: 24px; }
  .arrow { width: 24px; height: 24px; border-radius: 5px; background: #555; box-shadow: 0 1px 2px #777; }
  .submitbar { height: 40px; border-top: 2px solid #8db3e6; background: #e6ecf6; display: flex; align-items: flex-start; padding-top: 1px; }
  .submit { width: 257px; height: 30px; margin: 0 auto; font-size: 15px; }
  .all { width: 136px; height: 21px; }

  footer { height: 20px; flex: none; background: #b8d87c; display: flex; justify-content: center; align-items: center; gap: 16px; font-size: 9px; color: #1a2a1a; }
  footer a { font-weight: 700; color: #10363c; }
  .bar { margin: 0 3px; }

  .taskbar { height: 48px; flex: none; border-top: 1px solid #b9bfc4; background: #eff1f6; display: grid; grid-template-columns: 1fr auto 1fr; align-items: center; }
  .weather { display: flex; align-items: center; gap: 8px; padding-left: 20px; font-size: 11px; line-height: 16px; }
  .weather span, .time span { display: block; }
  .dim { color: #666; }
  .apps { display: flex; align-items: center; padding-bottom: 1px; }
  .app { position: relative; width: 38px; height: 38px; margin: 0 3px; border-radius: 4px; }
  .search { width: 218px; height: 30px; margin: 0 2px 0 3px; border-radius: 15px; background: #fff; border-bottom: 1px solid #d8dade; display: flex; align-items: center; gap: 8px; padding: 0 14px 0 11px; }
  .search input { flex: 1; min-width: 0; border: 0; padding: 0; background: none; outline: 0; font: 14px 'Noto Sans CJK SC', sans-serif; }
  .search input::placeholder { color: #555; opacity: 1; }
  .live { background: #fcfdfe; }
  .live::after, .dot::after { content: ''; position: absolute; bottom: 0; width: 16px; height: 3px; border-radius: 2px; background: #1a77c8; }
  .dot::after { width: 6px; background: #888; }
  .new { font: bold 7px 'Liberation Sans', sans-serif; fill: #043a44; }
  .tray { display: flex; align-items: center; justify-content: flex-end; gap: 14px; padding-right: 19px; }
  .chevron { margin-right: 3px; }
  .status-icons { display: flex; gap: 9px; }
  .ime { font: 15px 'Noto Sans CJK SC', sans-serif; margin: 0 2px 0 5px; }
  .time { text-align: right; font-size: 11px; line-height: 16px; width: 58px; }
  .tray > :last-child { margin-left: -6px; }

  .watermarks { position: absolute; inset: 0; overflow: hidden; pointer-events: none; opacity: .34; }
  .watermarks span { position: absolute; white-space: nowrap; font: 44px/1 'DejaVu Sans Mono', monospace; color: #ff5858; -webkit-text-stroke: 1px #ff5858; text-shadow: 2px 2px 1px #555; transform: rotate(-30deg); transform-origin: left bottom; translate: 0 -100%; }
</style>
